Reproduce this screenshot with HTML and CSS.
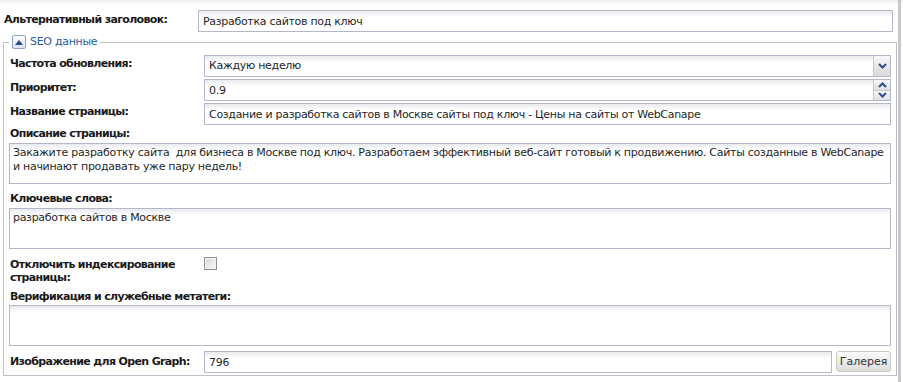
FILE: index.html
```html
<!DOCTYPE html>
<html lang="ru">

<head>
    <meta charset="UTF-8">
    <title>SEO данные</title>
    <link rel="stylesheet" href="styles.css">
</head>

<body>
    <div class="page">
        <div class="main">
            <div class="top-row">
                <label class="label" for="alt-title">Альтернативный заголовок:</label>
                <input class="field" id="alt-title" type="text" value="Разработка сайтов под ключ">
            </div>

            <fieldset class="seo">
                <legend>
                    <span class="toggle">
                        <svg width="8" height="5" viewBox="0 0 8 5"><path d="M0 5 L4 0 L8 5 Z" fill="#2a4a86"/></svg>
                    </span>
                    <span class="legend-text">SEO данные</span>
                </legend>

                <div class="row">
                    <label class="label">Частота обновления:</label>
                    <div class="combo">
                        <span class="combo-value">Каждую неделю</span>
                        <span class="combo-btn">
                            <svg width="9" height="6" viewBox="0 0 9 6"><path d="M1 1 L4.5 4.5 L8 1" fill="none" stroke="#2e4e8a" stroke-width="2"/></svg>
                        </span>
                    </div>
                </div>

                <div class="row">
                    <label class="label" for="priority">Приоритет:</label>
                    <div class="spin">
                        <input class="spin-input" id="priority" type="text" value="0.9">
                        <span class="spin-btns">
                            <span class="spin-btn">
                                <svg width="9" height="6" viewBox="0 0 9 6"><path d="M1 5 L4.5 1.5 L8 5" fill="none" stroke="#2e4e8a" stroke-width="2"/></svg>
                            </span>
                            <span class="spin-btn">
                                <svg width="9" height="6" viewBox="0 0 9 6"><path d="M1 1 L4.5 4.5 L8 1" fill="none" stroke="#2e4e8a" stroke-width="2"/></svg>
                            </span>
                        </span>
                    </div>
                </div>

                <div class="row">
                    <label class="label" for="page-title">Название страницы:</label>
                    <input class="field" id="page-title" type="text" value="Создание и разработка сайтов в Москве сайты под ключ - Цены на сайты от WebCanape">
                </div>

                <label class="label block-label desc-label" for="description">Описание страницы:</label>
                <textarea class="area" id="description">Закажите разработку сайта  для бизнеса в Москве под ключ. Разработаем эффективный веб-сайт готовый к продвижению. Сайты созданные в WebCanape и начинают продавать уже пару недель!</textarea>

                <label class="label block-label keys-label" for="keywords">Ключевые слова:</label>
                <textarea class="area" id="keywords">разработка сайтов в Москве</textarea>

                <div class="check-row">
                    <label class="label two-line" for="noindex">Отключить индексирование страницы:</label>
                    <input class="check" id="noindex" type="checkbox">
                </div>

                <label class="label block-label meta-label" for="meta">Верификация и служебные метатеги:</label>
                <textarea class="area" id="meta"></textarea>

                <div class="row og-row">
                    <label class="label" for="og-image">Изображение для Open Graph:</label>
                    <div class="og-field">
                        <input class="field" id="og-image" type="text" value="796">
                        <button class="gallery" type="button">Галерея</button>
                    </div>
                </div>
            </fieldset>
        </div>
        <div class="edge"></div>
    </div>
</body>

</html>
```

FILE: styles.css
```css
* {
    margin: 0;
    padding: 0;
    box-sizing: border-box;
}

body {
    font-family: 'DejaVu Sans', Tahoma, Verdana, sans-serif;
    font-size: 11px;
    letter-spacing: -0.3px;
    color: #1f1f1f;
    background: #fff;
    width: 903px;
    height: 382px;
    overflow: hidden;
}

.page {
    display: flex;
    height: 382px;
    background: linear-gradient(#eeeeee, #ffffff 5px);
}

.main {
    width: 898px;
    padding-top: 10px;
}

.edge {
    width: 3px;
    background: #c8c8c8;
}

.label {
    font-weight: bold;
    color: #1a1a1a;
    line-height: 14px;
    letter-spacing: -0.65px;
}

.top-row {
    display: flex;
    align-items: flex-start;
    padding-left: 4px;
    height: 22px;
}

.top-row .label {
    width: 194px;
    padding-top: 3px;
}

.field {
    display: block;
    height: 22px;
    border: 1px solid #b4b7c9;
    background: linear-gradient(#e8eaed, #ffffff 6px);
    font-family: inherit;
    font-size: 11px;
    letter-spacing: -0.3px;
    color: #1f1f1f;
    padding: 0 4px;
    outline: none;
}

.top-row .field {
    width: 695px;
}

.seo {
    margin: 3px 0 0 3px;
    width: 894px;
    border: 1px solid #bfc0cf;
    padding: 6px 5px 2px 5px;
}

.seo legend {
    display: flex;
    align-items: center;
    gap: 4px;
    padding: 0 3px;
    height: 14px;
}

.toggle {
    width: 14px;
    height: 14px;
    border: 1px solid #8ea4ca;
    border-radius: 2px;
    background: linear-gradient(#ffffff, #d9e3f2);
    display: flex;
    align-items: center;
    justify-content: center;
}

.legend-text {
    color: #2d5a9c;
    line-height: 14px;
}

.row {
    display: grid;
    grid-template-columns: 195px 1fr;
    height: 22px;
    margin-bottom: 2px;
}

.row .label {
    padding: 2px 0 0 1px;
}

.combo,
.spin {
    display: flex;
    height: 22px;
    border: 1px solid #b4b7c9;
    background: linear-gradient(#e8eaed, #ffffff 6px);
}

.combo-value {
    flex: 1;
    padding: 0 4px;
    line-height: 20px;
}

.combo-btn {
    width: 17px;
    border-left: 1px solid #c4c6d3;
    background: linear-gradient(#f7f7f7, #d9d9d9);
    display: flex;
    align-items: center;
    justify-content: center;
}

.spin-input {
    flex: 1;
    border: none;
    background: transparent;
    font-family: inherit;
    font-size: 11px;
    letter-spacing: -0.3px;
    color: #1f1f1f;
    padding: 0 4px;
    outline: none;
}

.spin-btns {
    width: 17px;
    display: flex;
    flex-direction: column;
    border-left: 1px solid #c4c6d3;
}

.spin-btn {
    flex: 1;
    display: flex;
    align-items: center;
    justify-content: center;
    background: linear-gradient(#f7f7f7, #e0e0e0);
}

.spin-btn + .spin-btn {
    border-top: 1px solid #c4c6d3;
}

.block-label {
    display: block;
    padding-left: 1px;
}

.desc-label {
    margin-top: 2px;
    margin-bottom: 2px;
}

.keys-label {
    margin-top: 8px;
    margin-bottom: 2px;
}

.meta-label {
    margin-top: 6px;
    margin-bottom: 1px;
}

.area {
    display: block;
    width: 100%;
    height: 41px;
    border: 1px solid #b4b7c9;
    background: linear-gradient(#e8eaed, #ffffff 6px);
    font-family: inherit;
    font-size: 11px;
    letter-spacing: -0.3px;
    line-height: 14px;
    color: #1f1f1f;
    padding: 2px 3px;
    resize: none;
    outline: none;
    overflow: hidden;
}

.check-row {
    display: grid;
    grid-template-columns: 195px 1fr;
    margin-top: 9px;
}

.two-line {
    padding-left: 1px;
    line-height: 13px;
    width: 185px;
}

.check {
    appearance: none;
    width: 13px;
    height: 13px;
    margin-top: -1px;
    border: 1px solid #8f8f8f;
    background: linear-gradient(135deg, #d6d6d6, #fbfbfb);
    box-shadow: inset 0 0 0 1px #f4f4f4;
}

.og-row {
    margin: 5px 0 0;
}

.og-row .label {
    padding-top: 4px;
}

.og-field {
    display: flex;
    gap: 4px;
}

.og-field .field {
    flex: 1;
}

.gallery {
    width: 55px;
    height: 21px;
    border: 1px solid #c9c9c9;
    border-radius: 3px;
    background: linear-gradient(#fbfbfb, #dcdcdc);
    font-family: inherit;
    font-size: 11px;
    color: #333;
}
```
